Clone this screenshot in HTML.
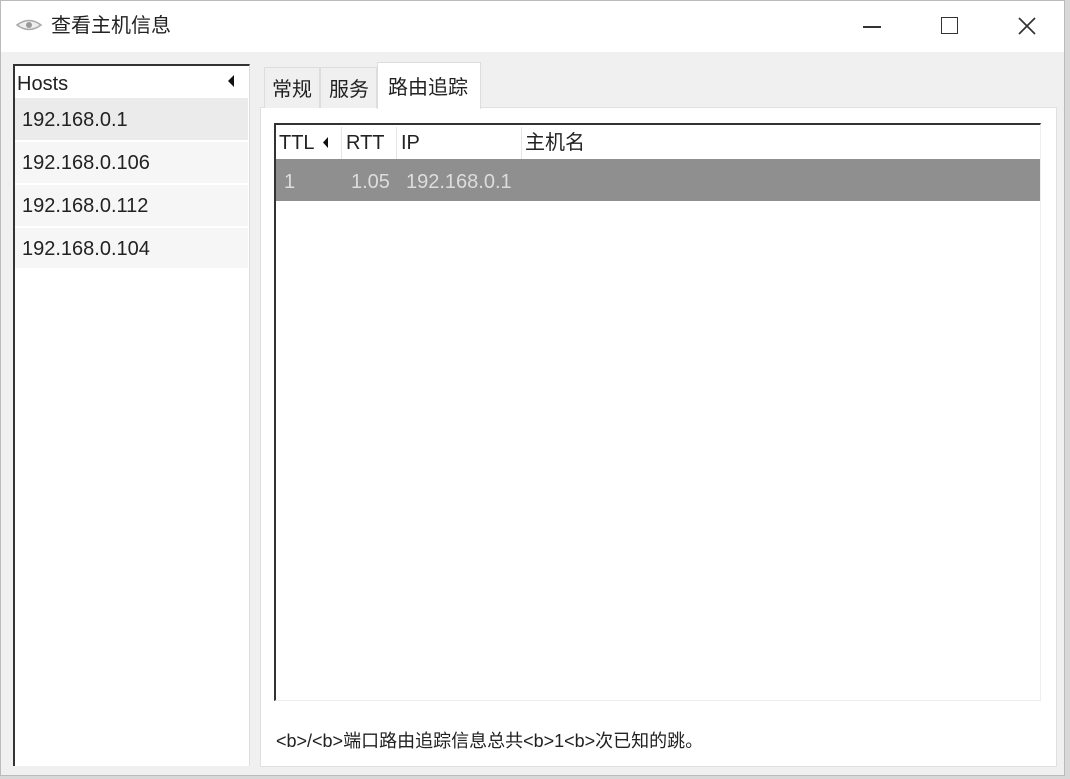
<!DOCTYPE html>
<html><head><meta charset="utf-8"><style>
*{margin:0;padding:0;box-sizing:border-box}
body{width:1070px;height:779px;background:#d8d8d8;font-family:"Liberation Sans","Noto Sans CJK SC",sans-serif;color:#222;position:relative;overflow:hidden}
.win{position:absolute;left:0;top:0;width:1065px;height:776px;background:#f0f0f0;border:1px solid #bbb}
.title{position:absolute;left:0;top:0;width:100%;height:51px;background:#fff}
.abs{position:absolute}
.t{font-size:20px;white-space:nowrap;line-height:24px}
</style></head><body>
<div class="win">
 <div class="title">
  <svg class="abs" style="left:14px;top:17px" width="28" height="14" viewBox="0 0 28 14"><path d="M2 7 Q14 -2 26 7 Q14 16 2 7Z" fill="#eee" stroke="#aaa" stroke-width="1.5"/><circle cx="14" cy="7" r="3" fill="#999"/></svg>
  <div class="abs t" style="left:50px;top:13px">查看主机信息</div>
  <div class="abs" style="left:862px;top:25px;width:18px;height:2px;background:#333"></div>
  <div class="abs" style="left:940px;top:16px;width:17px;height:17px;border:1.5px solid #333"></div>
  <svg class="abs" style="left:1016px;top:15px" width="20" height="20"><path d="M2 2L18 18M18 2L2 18" stroke="#333" stroke-width="1.7"/></svg>
 </div>
 <div class="abs" style="left:12px;top:63px;width:237px;height:702px;background:#fff;border-left:2px solid #333;border-top:2px solid #333;border-right:1px solid #ddd"></div>
 <div class="abs t" style="left:16px;top:71px">Hosts</div>
 <svg class="abs" style="left:226px;top:74px" width="8" height="12"><path d="M7 0L1 6L7 12Z" fill="#111"/></svg>
 <div class="abs" style="left:14px;top:97px;width:233px;height:42px;background:#ebebeb"></div>
 <div class="abs" style="left:14px;top:141px;width:233px;height:41px;background:#f6f6f6"></div>
 <div class="abs" style="left:14px;top:184px;width:233px;height:41px;background:#f6f6f6"></div>
 <div class="abs" style="left:14px;top:227px;width:233px;height:40px;background:#f6f6f6"></div>
 <div class="abs t" style="left:21px;top:107px">192.168.0.1</div>
 <div class="abs t" style="left:21px;top:150px">192.168.0.106</div>
 <div class="abs t" style="left:21px;top:193px">192.168.0.112</div>
 <div class="abs t" style="left:21px;top:236px">192.168.0.104</div>
 <div class="abs" style="left:259px;top:106px;width:797px;height:660px;background:#fff;border:1px solid #e0e0e0"></div>
 <div class="abs" style="left:263px;top:66px;width:56px;height:41px;border:1px solid #ddd;border-bottom:none;background:#f0f0f0"></div>
 <div class="abs" style="left:319px;top:66px;width:57px;height:41px;border:1px solid #ddd;border-bottom:none;background:#f0f0f0"></div>
 <div class="abs" style="left:376px;top:61px;width:104px;height:47px;border:1px solid #ddd;border-bottom:none;background:#fff"></div>
 <div class="abs t" style="left:271px;top:77px">常规</div>
 <div class="abs t" style="left:328px;top:77px">服务</div>
 <div class="abs t" style="left:387px;top:75px">路由追踪</div>
 <div class="abs" style="left:273px;top:122px;width:767px;height:578px;background:#fff;border-left:2px solid #333;border-top:2px solid #333;border-right:1px solid #eee;border-bottom:1px solid #eee"></div>
 <div class="abs" style="left:340px;top:126px;width:1px;height:32px;background:#e5e5e5"></div>
 <div class="abs" style="left:395px;top:126px;width:1px;height:32px;background:#e5e5e5"></div>
 <div class="abs" style="left:520px;top:126px;width:1px;height:32px;background:#e5e5e5"></div>
 <div class="abs t" style="left:278px;top:130px">TTL</div>
 <svg class="abs" style="left:321px;top:136px" width="7" height="11"><path d="M6 0L1 5.5L6 11Z" fill="#111"/></svg>
 <div class="abs t" style="left:345px;top:130px">RTT</div>
 <div class="abs t" style="left:400px;top:130px">IP</div>
 <div class="abs t" style="left:524px;top:130px">主机名</div>
 <div class="abs" style="left:275px;top:158px;width:764px;height:42px;background:#8f8f8f"></div>
 <div class="abs t" style="left:283px;top:169px;color:#ddd">1</div>
 <div class="abs t" style="left:350px;top:169px;color:#ddd">1.05</div>
 <div class="abs t" style="left:405px;top:169px;color:#ddd">192.168.0.1</div>
 <div class="abs t" style="left:275px;top:728px;font-size:18px">&lt;b&gt;/&lt;b&gt;端口路由追踪信息总共&lt;b&gt;1&lt;b&gt;次已知的跳。</div>
</div>
</body></html>
